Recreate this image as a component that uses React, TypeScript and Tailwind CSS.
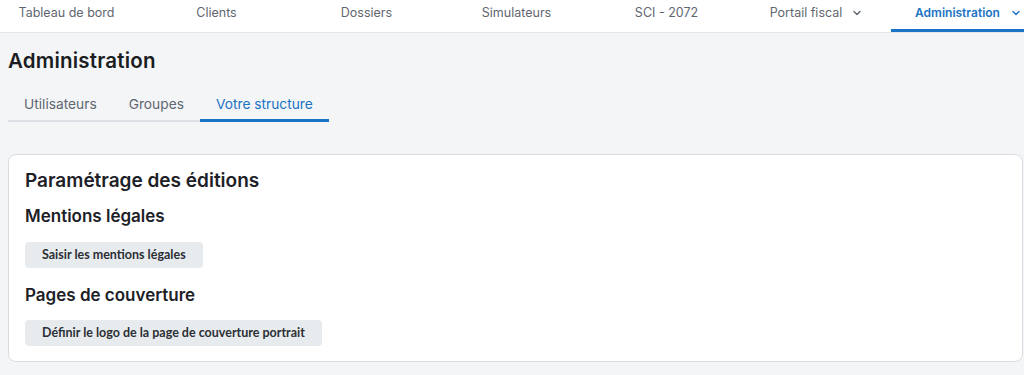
import { ChevronDown } from "lucide-react";

const navItems = [
  { label: "Tableau de bord" },
  { label: "Clients" },
  { label: "Dossiers" },
  { label: "Simulateurs" },
  { label: "SCI - 2072" },
  { label: "Portail fiscal", menu: true },
];

const tabs = ["Utilisateurs", "Groupes", "Votre structure"];

export default function App() {
  return (
    <div className="min-h-[375px] w-[1024px] overflow-hidden bg-[#f4f5f7] font-['Inter',sans-serif] text-[#1d2127]">
      {/* Top navigation */}
      <nav className="flex h-[33px] gap-[17px] border-b border-[#e3e6ea] bg-white">
        {navItems.map((item) => (
          <a
            key={item.label}
            className="flex w-[133px] shrink-0 items-center justify-center gap-[9px] pb-[6px] text-[12.5px] text-[#5f6670]"
          >
            {item.label}
            {item.menu && <ChevronDown className="h-[12px] w-[12px]" strokeWidth={2.75} />}
          </a>
        ))}
        <a className="-ml-[9px] flex w-[133px] shrink-0 items-center justify-center gap-[10px] border-b-[3px] border-[#1a73c4] pb-[3px] pl-[22px] text-[12px] font-semibold text-[#1a73c4]">
          Administration
          <ChevronDown className="h-[12px] w-[12px]" strokeWidth={2.75} />
        </a>
      </nav>

      <main className="pr-px pl-2">
        <h1 className="mt-[14px] text-[20.5px] leading-[28px] font-semibold tracking-[0.2px] text-[#1a1d21]">
          Administration
        </h1>

        {/* Sub tabs */}
        <div className="mt-[11px] flex">
          {tabs.map((tab) => {
            const active = tab === "Votre structure";
            return (
              <button
                key={tab}
                className={
                  active
                    ? "h-[36px] border-b-[3px] border-[#1a73c4] px-4 pt-[3px] text-[13.75px] text-[#1a73c4]"
                    : "h-[36px] border-b-2 border-[#dde1e6] px-4 pt-[2px] text-[13.75px] text-[#5f6670]"
                }
              >
                {tab}
              </button>
            );
          })}
        </div>

        {/* Editions settings card */}
        <section className="mt-[32px] rounded-lg border border-[#d9dde2] bg-white px-4 pt-[13px] pb-[15px]">
          <h2 className="text-[19px] leading-[26px] font-semibold text-[#1d2127]">
            Paramétrage des éditions
          </h2>

          <h3 className="mt-[10px] text-[17px] leading-[24px] font-semibold text-[#1d2127]">
            Mentions légales
          </h3>
          <button className="mt-[14px] h-[26px] rounded-[4px] bg-[#e8ebee] px-[17px] font-['Lato',sans-serif] text-[12.5px] font-bold text-[#2b2f35]">
            Saisir les mentions légales
          </button>

          <h3 className="mt-[15px] text-[17px] leading-[24px] font-semibold text-[#1d2127]">
            Pages de couverture
          </h3>
          <div>
            <button className="mt-[13px] h-[26px] rounded-[4px] bg-[#e8ebee] px-[17px] font-['Lato',sans-serif] text-[12.5px] font-bold text-[#2b2f35]">
              Définir le logo de la page de couverture portrait
            </button>
          </div>
        </section>
      </main>
    </div>
  );
}
